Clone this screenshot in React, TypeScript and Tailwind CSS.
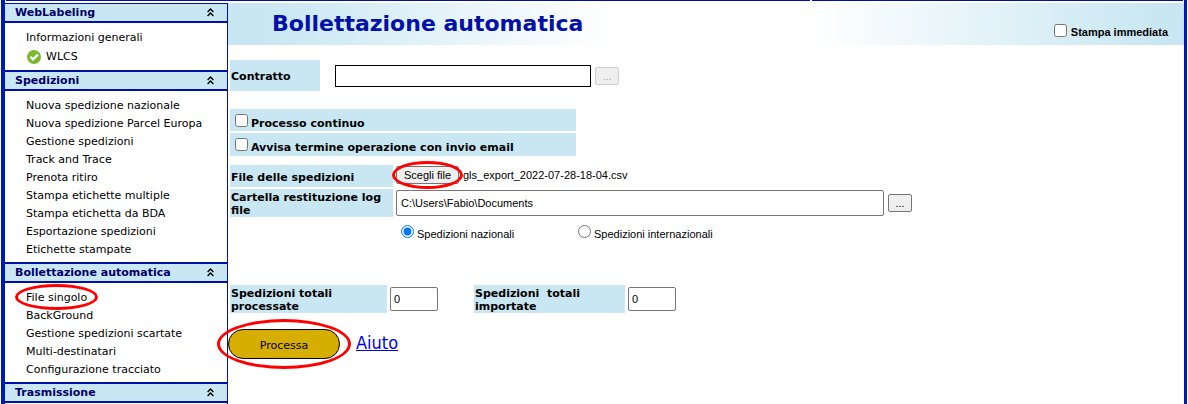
import { useRef, useState } from "react";
import type { ReactNode } from "react";

function CheckBadge() {
  return (
    <svg width="14" height="14" viewBox="0 0 14 14" aria-hidden="true">
      <circle cx="7" cy="7" r="7" fill="#7ab82e" />
      <path d="M3.4 6.8 6 9.4 10.8 4.6" fill="none" stroke="#fff" strokeWidth="2.2" />
    </svg>
  );
}

function DoubleChevron() {
  return (
    <svg width="7" height="9" viewBox="0 0 7 9" aria-hidden="true">
      <path d="M.6 4 3.5 1.1 6.4 4M.6 8 3.5 5.1 6.4 8" fill="none" stroke="#000" strokeWidth="1.4" />
    </svg>
  );
}

function Ring({ className }: { className: string }) {
  return (
    <span
      aria-hidden="true"
      className={`pointer-events-none absolute rounded-[50%] border-solid border-[#ff0000] ${className}`}
    />
  );
}

type Item = { label: string; ok?: boolean; ringed?: boolean };

const sections: { title: string; items: Item[] }[] = [
  { title: "WebLabeling", items: [{ label: "Informazioni generali" }, { label: "WLCS", ok: true }] },
  {
    title: "Spedizioni",
    items: [
      { label: "Nuova spedizione nazionale" },
      { label: "Nuova spedizione Parcel Europa" },
      { label: "Gestione spedizioni" },
      { label: "Track and Trace" },
      { label: "Prenota ritiro" },
      { label: "Stampa etichette multiple" },
      { label: "Stampa etichetta da BDA" },
      { label: "Esportazione spedizioni" },
      { label: "Etichette stampate" },
    ],
  },
  {
    title: "Bollettazione automatica",
    items: [
      { label: "File singolo", ringed: true },
      { label: "BackGround" },
      { label: "Gestione spedizioni scartate" },
      { label: "Multi-destinatari" },
      { label: "Configurazione tracciato" },
    ],
  },
  { title: "Trasmissione", items: [] },
];

function Sidebar() {
  return (
    <nav className="w-[223px] shrink-0 border-r border-[#0010a8]">
      {sections.map((s, i) => (
        <section key={s.title}>
          <h2 className={`border-b-2 border-[#0010a8] bg-[#c9e7f2] ${i === 0 ? "border-t" : "border-t-2"}`}>
            <button type="button" className="flex h-[17px] w-full items-center justify-between pr-[13px] pl-[10px] text-[11px] leading-4 font-bold text-[#00006b]">
              {s.title}
              <DoubleChevron />
            </button>
          </h2>
          {s.items.length > 0 && (
            <ul className="pt-1.5 pb-[3px] pl-[21px]">
              {s.items.map((it) => (
                <li key={it.label} className={`flex items-center ${it.ok ? "h-5" : "h-[18px]"}`}>
                  <a href="#" className="relative flex items-center gap-[5px] text-[11px] leading-[18px] text-black">
                    {it.ok && (
                      <span className="pl-px">
                        <CheckBadge />
                      </span>
                    )}
                    {it.label}
                    {it.ringed && <Ring className="-inset-x-[11px] -top-[5px] h-[26px] border-[3px]" />}
                  </a>
                </li>
              ))}
            </ul>
          )}
        </section>
      ))}
    </nav>
  );
}

function Cell({ className, htmlFor, children }: { className: string; htmlFor: string; children: ReactNode }) {
  return (
    <label htmlFor={htmlFor} className={`flex shrink-0 items-center bg-[#c9e7f2] pl-px leading-[13px] font-bold ${className}`}>
      {children}
    </label>
  );
}

const arial = "font-['Liberation_Sans',Arial,sans-serif]";
const box = "m-0 size-[13px] shrink-0";

function TickRow({ id, className, children }: { id: string; className: string; children: ReactNode }) {
  return (
    <div className={`flex items-center gap-[3px] bg-[#c9e7f2] pl-[5px] ${className}`}>
      <input id={id} type="checkbox" className={box} />
      <label htmlFor={id} className="pt-1.5 leading-[13px] font-bold">
        {children}
      </label>
    </div>
  );
}

export default function App() {
  const picker = useRef<HTMLInputElement>(null);
  const [fileName, setFileName] = useState("gls_export_2022-07-28-18-04.csv");

  return (
    <div className="min-h-screen overflow-hidden bg-white pr-px pl-px font-[Verdana,'DejaVu_Sans',sans-serif] text-[11px] text-black">
      <div className="flex min-h-screen flex-col border-r-[3px] border-l-4 border-[#0018b4]">
        <div className="mb-0.5 flex gap-0.5 px-px">
          <div className="h-px grow-[803] bg-[#0010a8]" />
          <div className="h-px grow-[371] bg-[#0010a8]" />
        </div>
        <div className="flex grow">
          <Sidebar />
          <main className="min-w-0 grow">
            <header className="flex h-[42px] items-center justify-between bg-[linear-gradient(to_right,#c9e7f2_0%,#c9e7f2_4%,#fff_40%,#fff_61%,#c9e7f2_97%,#c9e7f2_100%)] pr-4 pl-11">
              <h1 className="text-[22px] leading-7 font-bold text-[#0010a8]">Bollettazione automatica</h1>
              <div className={`flex items-center gap-1 pt-3 ${arial}`}>
                <input id="stampa" type="checkbox" className={box} />
                <label htmlFor="stampa" className="pt-1 leading-[13px] font-bold">
                  Stampa immediata
                </label>
              </div>
            </header>

            <form className="pl-0.5" onSubmit={(e) => e.preventDefault()}>
              <div className="mt-[15px] flex items-center">
                <Cell htmlFor="contratto" className="h-[31px] w-[90px] pt-px">
                  Contratto
                </Cell>
                <input id="contratto" type="text" className="ml-[15px] h-[22px] w-64 border border-black bg-white px-1" />
                <button type="button" disabled aria-label="Scegli contratto" className={`ml-1 h-[18px] w-6 rounded-[2px] border border-[#cfcfcf] bg-[#efefef] leading-4 text-[#a8a8a8] ${arial}`}>
                  ...
                </button>
              </div>

              <div className="mt-[18px] flex w-[346px] flex-col gap-0.5">
                <TickRow id="continuo" className="h-[22px]">
                  Processo continuo
                </TickRow>
                <TickRow id="avvisa" className="h-[23px]">
                  Avvisa termine operazione con invio email
                </TickRow>
              </div>

              <div className="mt-[9px] flex flex-col gap-0.5">
                <div className="flex gap-[3px]">
                  <Cell htmlFor="file" className="h-[22px] w-[163px] pt-0.5">
                    File delle spedizioni
                  </Cell>
                  <div className={`flex h-5 items-center gap-1 ${arial}`}>
                    <input
                      ref={picker}
                      id="file"
                      type="file"
                      className="hidden"
                      onChange={(e) => setFileName(e.target.files?.[0]?.name ?? "")}
                    />
                    <button type="button" onClick={() => picker.current?.click()} className="relative h-[18px] w-[63px] rounded-[2px] border border-[#767676] bg-[#efefef] leading-4">
                      Scegli file
                      <Ring className="-inset-x-[5px] -top-[6px] h-[28px] border-[3px]" />
                    </button>
                    <span>{fileName}</span>
                  </div>
                </div>
                <div className="flex items-center gap-[3px]">
                  <Cell htmlFor="cartella" className="h-7 w-[163px] pt-px">
                    Cartella restituzione log file
                  </Cell>
                  <input id="cartella" type="text" defaultValue="C:\Users\Fabio\Documents" className={`h-[26px] w-[488px] rounded-[2px] border border-[#767676] bg-white px-1 ${arial}`} />
                  <button type="button" aria-label="Sfoglia cartella" className={`ml-px h-[18px] w-6 rounded-[2px] border border-[#767676] bg-[#efefef] leading-4 ${arial}`}>
                    ...
                  </button>
                </div>
              </div>

              <div className={`mt-2 flex h-4 items-start pl-[171px] ${arial}`}>
                <div className="flex w-[177px] gap-[3px]">
                  <input id="naz" name="tipo" type="radio" defaultChecked className={box} />
                  <label htmlFor="naz" className="pt-[3px] leading-[13px]">
                    Spedizioni nazionali
                  </label>
                </div>
                <div className="flex gap-[3px]">
                  <input id="int" name="tipo" type="radio" className={box} />
                  <label htmlFor="int" className="pt-[3px] leading-[13px]">
                    Spedizioni internazionali
                  </label>
                </div>
              </div>

              <div className="mt-11 flex items-center gap-[3px]">
                <Cell htmlFor="processate" className="h-7 w-[157px] pt-px">
                  <span>
                    Spedizioni totali
                    <br />
                    processate
                  </span>
                </Cell>
                <input id="processate" type="text" defaultValue="0" className={`h-6 w-12 rounded-[2px] border border-[#767676] bg-white px-[3px] ${arial}`} />
                <Cell htmlFor="importate" className="ml-[33px] h-7 w-[151px] pt-px">
                  <span>
                    Spedizioni&nbsp; totali
                    <br />
                    importate
                  </span>
                </Cell>
                <input id="importate" type="text" defaultValue="0" className={`h-6 w-12 rounded-[2px] border border-[#767676] bg-white px-[3px] ${arial}`} />
              </div>

              <div className="mt-4 -ml-0.5 flex items-start gap-4">
                <button type="submit" className="relative h-[30px] w-28 rounded-full border border-black bg-[#d6ae00] pt-1">
                  Processa
                  <Ring className="-inset-x-3 -top-[11px] h-[50px] border-[3px]" />
                </button>
                <a href="#" className="pt-0.5 font-[Tahoma,'DejaVu_Sans_Condensed','DejaVu_Sans',sans-serif] text-[18px] leading-6 text-[#0000ee] underline">
                  Aiuto
                </a>
              </div>
            </form>
          </main>
        </div>
      </div>
    </div>
  );
}
